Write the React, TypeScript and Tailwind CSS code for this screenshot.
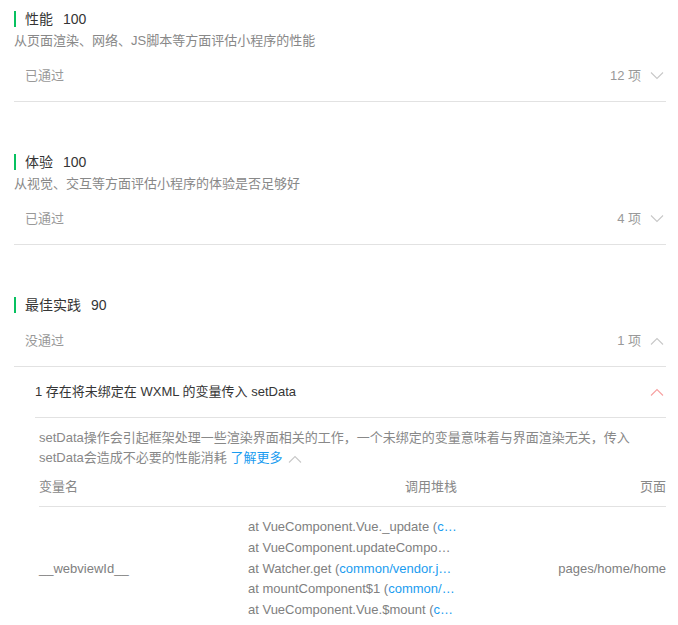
import React from "react";

const font = {
  fontFamily: '"Liberation Sans", "Noto Sans CJK SC", sans-serif',
};

function Chevron({ up = false, color = "#c8c8c8" }: { up?: boolean; color?: string }) {
  return (
    <svg width="14" height="8" viewBox="0 0 14 8" fill="none" className="shrink-0">
      <path
        d={up ? "M1 7.5 L7 1.5 L13 7.5" : "M1 0.5 L7 6.5 L13 0.5"}
        stroke={color}
        strokeWidth="1.1"
      />
    </svg>
  );
}

function SectionTitle({ name, score }: { name: string; score: number }) {
  return (
    <div className="flex items-center h-[22px]">
      <span className="w-[2px] h-[16px] bg-[#07c160] mr-[9px]" />
      <span className="text-[14px] text-[#353535]">
        {name}
        <span className="ml-[10px]">{score}</span>
      </span>
    </div>
  );
}

function StatusRow({ label, count, open = false }: { label: string; count: number; open?: boolean }) {
  return (
    <div className="flex items-center justify-between h-[51px] pl-[11px] pr-[2px] border-b border-[#e2e2e2]">
      <span className="text-[13px] text-[#999]">{label}</span>
      <span className="flex items-center gap-[9px] text-[13px] text-[#999]">
        {count} 项
        <Chevron up={open} />
      </span>
    </div>
  );
}

const stack: [string, string][] = [
  ["at VueComponent.Vue._update (", "c…"],
  ["at VueComponent.updateCompo…", ""],
  ["at Watcher.get (", "common/vendor.j…"],
  ["at mountComponent$1 (", "common/…"],
  ["at VueComponent.Vue.$mount (", "c…"],
];

export default function App() {
  return (
    <div className="w-[678px] h-[625px] overflow-hidden bg-white px-[12px] pt-[8px]" style={font}>
      <div className="w-[652px] ml-[2px]">
        {/* 性能 */}
        <SectionTitle name="性能" score={100} />
        <div className="text-[13px] leading-[20px] text-[#888] mt-[1px]">
          从页面渲染、网络、JS脚本等方面评估小程序的性能
        </div>
        <StatusRow label="已通过" count={12} />

        {/* 体验 */}
        <div className="mt-[49px]">
          <SectionTitle name="体验" score={100} />
          <div className="text-[13px] leading-[20px] text-[#888] mt-[1px]">
            从视觉、交互等方面评估小程序的体验是否足够好
          </div>
          <StatusRow label="已通过" count={4} />
        </div>

        {/* 最佳实践 */}
        <div className="mt-[49px]">
          <SectionTitle name="最佳实践" score={90} />
          <StatusRow label="没通过" count={1} open />

          <div className="pl-[21px]">
            <div className="flex items-center justify-between h-[51px] pr-[2px] border-b border-[#e2e2e2]">
              <span className="text-[13px] text-[#353535]">1 存在将未绑定在 WXML 的变量传入 setData</span>
              <Chevron up color="#f7a1a1" />
            </div>

            <div className="pl-[4px]">
              <div className="text-[13px] leading-[20px] text-[#888] pt-[10px]">
                setData操作会引起框架处理一些渲染界面相关的工作，一个未绑定的变量意味着与界面渲染无关，传入setData会造成不必要的性能消耗{" "}
                <span className="text-[#1a9cf0]">了解更多</span>
                <span className="inline-block ml-[6px] align-middle">
                  <Chevron up />
                </span>
              </div>

              <div className="grid grid-cols-3 h-[39px] items-center border-b border-[#e2e2e2] text-[13px] text-[#888]">
                <span>变量名</span>
                <span className="text-right">调用堆栈</span>
                <span className="text-right">页面</span>
              </div>

              <div className="grid grid-cols-3 items-center text-[13px] text-[#808080] pt-[10px]">
                <span>__webviewId__</span>
                <div className="leading-[20.75px]">
                  {stack.map(([a, b], i) => (
                    <div key={i} className="whitespace-nowrap">
                      {a}
                      {b && <span className="text-[#1a9cf0]">{b}</span>}
                    </div>
                  ))}
                </div>
                <span className="text-right">pages/home/home</span>
              </div>
            </div>
          </div>
        </div>
      </div>
    </div>
  );
}
